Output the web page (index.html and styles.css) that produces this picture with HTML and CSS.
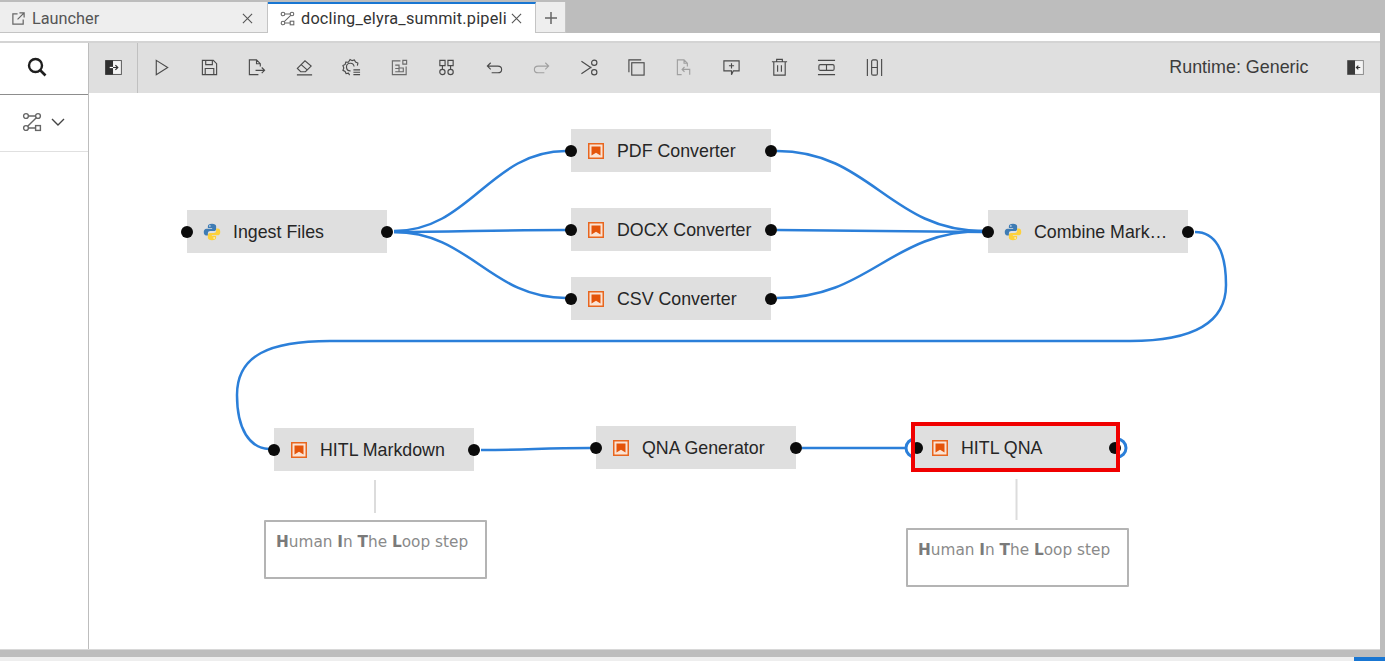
FILE: index.html
```html
<!DOCTYPE html>
<html lang="en">
<head>
<meta charset="utf-8">
<title>docling_elyra_summit.pipeline</title>
<link rel="stylesheet" href="styles.css">
</head>
<body>
<svg class="defs" width="0" height="0" aria-hidden="true">
  <defs>
    <symbol id="i-pipe" viewBox="0 0 20 20"><g fill="none" stroke="currentColor" stroke-width="1.4"><circle cx="4" cy="4" r="2.4"/><circle cx="16" cy="4" r="2.4"/><circle cx="4" cy="16" r="2.4"/><rect x="13.6" y="13.6" width="4.8" height="4.8"/><path d="M6.4 4H13.6M14.3 5.7L5.7 14.3M6.4 16H13.6"/></g></symbol>
    <symbol id="i-book" viewBox="0 0 16 16"><rect x=".75" y=".75" width="14.5" height="14.5" fill="#fbe3d4" stroke="#e8661f" stroke-width="1.5"/><path d="M3.5 3.5H12.5V12.5L8 9.8L3.5 12.5Z" fill="#e4540a"/></symbol>
    <symbol id="i-py" viewBox="0 0 24 24"><path fill="#3f7cb4" d="M12 1C8.2 1 6.5 2.2 6.5 4.3V6.6H12.2V7.6H4.6C2.4 7.6 1 9.4 1 12.1C1 15 2.3 16.6 4.4 16.6H6.5V13.7C6.5 11.9 8 10.7 9.7 10.7H14.6C16.2 10.7 17.5 9.5 17.5 7.9V4.3C17.5 2.3 15.4 1 12 1Z"/><path fill="#fdd13b" d="M12 23C15.8 23 17.5 21.8 17.5 19.7V17.4H11.8V16.4H19.4C21.6 16.4 23 14.6 23 11.9C23 9 21.7 7.4 19.6 7.4H17.5V10.3C17.5 12.1 16 13.3 14.3 13.3H9.4C7.8 13.3 6.5 14.5 6.5 16.1V19.7C6.5 21.7 8.6 23 12 23Z"/><circle cx="9.2" cy="3.9" r="1" fill="#fff"/><circle cx="14.8" cy="20.1" r="1" fill="#fff"/></symbol>
  </defs>
</svg>

<header class="tabbar">
  <div class="tab tab-launcher">
    <svg class="tab-icon" viewBox="0 0 16 16"><path d="M13 9V14H2V3H7M9 2H14V7M14 2L7 9" fill="none" stroke="currentColor" stroke-width="1.3"/></svg>
    <span class="tab-label">Launcher</span>
    <svg class="tab-close" viewBox="0 0 12 12"><path d="M1 1L11 11M11 1L1 11" stroke="currentColor" stroke-width="1.2"/></svg>
  </div>
  <div class="tab tab-active">
    <svg class="tab-icon"><use href="#i-pipe"/></svg>
    <span class="tab-label">docling_elyra_summit.pipeli</span>
    <svg class="tab-close" viewBox="0 0 12 12"><path d="M1 1L11 11M11 1L1 11" stroke="currentColor" stroke-width="1.2"/></svg>
  </div>
  <div class="tab tab-add">
    <svg class="add-icon" viewBox="0 0 12 12"><path d="M6 0V12M0 6H12" stroke="currentColor" stroke-width="1.5"/></svg>
  </div>
</header>

<div class="shell">
  <main class="workspace">
    <aside class="palette">
      <div class="palette-search">
        <svg class="search-icon" viewBox="0 0 20 20"><circle cx="8.5" cy="8.5" r="6.5" fill="none" stroke="currentColor" stroke-width="2.4"/><path d="M13 13L18.5 18.5" stroke="currentColor" stroke-width="2.6"/></svg>
      </div>
      <div class="palette-cat">
        <svg class="cat-icon"><use href="#i-pipe"/></svg>
        <svg class="chev" viewBox="0 0 14 8"><path d="M1 1L7 7L13 1" fill="none" stroke="currentColor" stroke-width="1.4"/></svg>
      </div>
    </aside>
    <section class="editor">
      <nav class="toolbar">
        <button class="tool tool-first" type="button"><svg viewBox="0 0 20 20"><rect x="1.7" y="2.7" width="16.6" height="14.6" fill="#f4f4f4" stroke="#555" stroke-width="1"/><rect x="1.5" y="2.5" width="8" height="15" fill="#2f2f2f"/><path d="M6 10H9.5" fill="none" stroke="#fff" stroke-width="1.3"/><path d="M9.5 10H14.5M12 7.5L14.5 10L12 12.5" fill="none" stroke="#333" stroke-width="1.3"/></svg></button>
        <button class="tool" type="button"><svg viewBox="0 0 20 20"><path d="M4.5 2.5L16.5 10L4.5 17.5Z"/></svg></button>
        <button class="tool" type="button"><svg viewBox="0 0 20 20"><path d="M2.5 2.5H14L17.5 6V17.5H2.5ZM6 2.5V7H13V2.5M5.5 17.5V11H14.5V17.5"/></svg></button>
        <button class="tool" type="button"><svg viewBox="0 0 20 20"><path d="M12 17.5H2.5V2H10L14 6V9M10 2V6H14M9 13H18.5M15.5 10L18.5 13L15.5 16"/></svg></button>
        <button class="tool" type="button"><svg viewBox="0 0 20 20"><path d="M2.5 11L10.5 3L17 8.5L11 14.5H6ZM6.5 7L12.8 12.5M2 17.7H18"/></svg></button>
        <button class="tool" type="button"><svg viewBox="0 0 20 20"><path d="M8 18L6.8 16L4.3 16.5L3.3 14.2L1 13L1.9 10.5L1 8L3.3 6.8L4 4.3L6.7 4.5L8.5 1.5L10.7 2.8L13 2L14.3 4.3L16.7 5.3L16.2 8M9 13.5A4 4 0 1 1 12.7 9M12 12.5H19M12 15H19M12 17.5H19"/></svg></button>
        <button class="tool tool-dim" type="button"><svg viewBox="0 0 20 20"><path d="M11 3H2.5V17.5H17V9M13.5 2.5H17.5V6.5H13.5ZM5.5 7.5H9.5V14.5H5.5M9.5 10.5H14V14.5H9.5M5.5 11H9.5"/></svg></button>
        <button class="tool" type="button"><svg viewBox="0 0 20 20"><path d="M3 2.5H8.5V8H3ZM11.5 2.5H17V8H11.5ZM5.7 8V12M14.3 8V12"/><circle cx="5.7" cy="14.7" r="2.8"/><circle cx="14.3" cy="14.7" r="2.8"/></svg></button>
        <button class="tool" type="button"><svg viewBox="0 0 20 20"><path d="M6 5L2.5 8.5L6 12M2.5 8.5H13.5C15.9 8.5 17.5 10 17.5 12C17.5 14 15.9 15.5 13.5 15.5H7"/></svg></button>
        <button class="tool tool-off" type="button"><svg viewBox="0 0 20 20"><path d="M14 5L17.5 8.5L14 12M17.5 8.5H6.5C4.1 8.5 2.5 10 2.5 12C2.5 14 4.1 15.5 6.5 15.5H13"/></svg></button>
        <button class="tool" type="button"><svg viewBox="0 0 20 20"><path d="M1.5 3.5L12 10.5M1.5 16.500L12 9.5"/><circle cx="15" cy="5" r="2.8"/><circle cx="15" cy="15" r="2.8"/></svg></button>
        <button class="tool" type="button"><svg viewBox="0 0 20 20"><path d="M2 15V2H15"/><rect x="5" y="5" width="13" height="13"/></svg></button>
        <button class="tool tool-off" type="button"><svg viewBox="0 0 20 20"><path d="M7 17.5H2.5V2H9.5L13 5.5V9M9.5 2V5.5H13M10 9.5L7.5 12L10 14.5M7.5 12H15.5V17.5"/></svg></button>
        <button class="tool" type="button"><svg viewBox="0 0 20 20"><path d="M2 3H18V13.5H12L10 17.5V13.5H2ZM10 5.5V11M7.3 8.2H12.7"/></svg></button>
        <button class="tool" type="button"><svg viewBox="0 0 20 20"><path d="M2 4H18M4 4V18H16V4M7 4V1.5H13V4M8 7.5V14.5M12 7.5V14.5"/></svg></button>
        <button class="tool" type="button"><svg viewBox="0 0 20 20"><path d="M1 2.500H19M1 17.500H19M10 7V13"/><rect x="2" y="7" width="16" height="6" rx="1.500"/></svg></button>
        <button class="tool" type="button"><svg viewBox="0 0 20 20"><path d="M2.500 1V19M17.500 1V19M7 10H13"/><rect x="7" y="2" width="6" height="16" rx="1.500"/></svg></button>
        <span class="runtime">Runtime: Generic</span>
        <button class="tool tool-last" type="button"><svg viewBox="0 0 20 20"><rect x="1.7" y="2.7" width="16.6" height="14.6" fill="#f4f4f4" stroke="#888" stroke-width="1"/><rect x="1.5" y="2.5" width="8" height="15" fill="#3a3a3a"/><path d="M15 10H11M13 8L11 10L13 12" fill="none" stroke="#333" stroke-width="1.3"/></svg></button>
      </nav>

      <div class="canvas">
        <svg class="links" viewBox="89 93 1291 557">
          <g class="link">
            <path d="M394 231C470 231 490 151 566 151"/>
            <path d="M394 232C450 232 500 230 566 230"/>
            <path d="M394 232C470 232 490 298 566 298"/>
            <path d="M777 151C870 151 890 231 983 231"/>
            <path d="M777 230L983 232"/>
            <path d="M777 298C870 298 890 231 983 231"/>
            <path d="M1195 232C1215 232 1226 250 1226 285C1226 325 1190 341 1130 341L330 341C270 341 237 355 237 395C237 430 250 448 269 449"/>
            <path d="M481 450C530 450 540 448 590 448"/>
            <path d="M802 448H906"/>
          </g>
          <g class="assoc">
            <path d="M375 480V513"/>
            <path d="M1016.5 479V520"/>
          </g>
          <g class="rings">
            <circle cx="915" cy="448" r="9"/>
            <circle cx="1117" cy="448" r="9"/>
          </g>
        </svg>

        <div class="node n-ingest"><i class="port in"></i><svg class="nicon"><use href="#i-py"/></svg><span class="nlabel">Ingest Files</span><i class="port out"></i></div>
        <div class="node n-pdf"><i class="port in"></i><svg class="nicon"><use href="#i-book"/></svg><span class="nlabel">PDF Converter</span><i class="port out"></i></div>
        <div class="node n-docx"><i class="port in"></i><svg class="nicon"><use href="#i-book"/></svg><span class="nlabel">DOCX Converter</span><i class="port out"></i></div>
        <div class="node n-csv"><i class="port in"></i><svg class="nicon"><use href="#i-book"/></svg><span class="nlabel">CSV Converter</span><i class="port out"></i></div>
        <div class="node n-combine"><i class="port in"></i><svg class="nicon"><use href="#i-py"/></svg><span class="nlabel">Combine Mark…</span><i class="port out"></i></div>
        <div class="node n-hitl"><i class="port in"></i><svg class="nicon"><use href="#i-book"/></svg><span class="nlabel">HITL Markdown</span><i class="port out"></i></div>
        <div class="node n-qna"><i class="port in"></i><svg class="nicon"><use href="#i-book"/></svg><span class="nlabel">QNA Generator</span><i class="port out"></i></div>
        <div class="node n-hitlqna"><i class="port in"></i><svg class="nicon"><use href="#i-book"/></svg><span class="nlabel">HITL QNA</span><i class="port out"></i></div>
        <div class="highlight"></div>

        <div class="comment c-one"><b>H</b>uman <b>I</b>n <b>T</b>he <b>L</b>oop step</div>
        <div class="comment c-two"><b>H</b>uman <b>I</b>n <b>T</b>he <b>L</b>oop step</div>
      </div>
    </section>
  </main>
</div>
<footer class="gutter"></footer>
<div class="statusbar"><span class="status-accent"></span></div>
</body>
</html>
```

FILE: styles.css
```css
* { box-sizing: border-box; }
html, body { margin: 0; height: 100%; }
body {
  display: flex;
  flex-direction: column;
  height: 661px;
  overflow: hidden;
  background: #bdbdbd;
  font-family: "Liberation Sans", Arial, sans-serif;
  color: #222;
}
.defs { position: absolute; }

/* tabs */
.tabbar { display: flex; height: 33px; padding-top: 2px; flex: none; }
.tab { display: flex; align-items: center; height: 31px; background: #eeeeee; border-right: 1px solid #c4c4c4; border-bottom: 1px solid #c4c4c4; color: #555; font-family: "Roboto", sans-serif; font-size: 16.3px; padding-top: 2px; }
.tab-launcher { width: 268px; padding-left: 11px; padding-right: 14px; }
.tab-active { width: 268px; background: #fff; border-top: 2px solid #1976d2; border-bottom: 0; padding-left: 12px; padding-right: 13px; padding-top: 0; color: #333; letter-spacing: .2px; }
.tab-add { width: 30px; justify-content: center; color: #666; }
.tab-icon { width: 15px; height: 15px; flex: none; margin-right: 6px; color: #666; }
.tab-label { flex: 1; min-width: 0; white-space: nowrap; }
.tab-close { width: 11px; height: 11px; flex: none; color: #555; margin-left: 3px; }
.add-icon { width: 12px; height: 12px; }

/* shell */
.shell { flex: none; height: 617px; margin-right: 5px; padding-top: 8px; background: #fff; border-bottom: 1px solid #d8d8d8; }
.workspace { display: flex; height: 608px; border-top: 2px solid #d4d4d4; }
.palette { width: 89px; flex: none; border-right: 1px solid #bdbdbd; }
.palette-search { display: flex; align-items: center; justify-content: center; height: 52px; padding-right: 14px; padding-bottom: 3px; border-bottom: 1px solid #8d8d8d; }
.search-icon { width: 20px; height: 20px; color: #1f1f1f; }
.palette-cat { display: flex; align-items: center; justify-content: center; gap: 9px; height: 57px; padding-right: 2px; padding-bottom: 2px; border-bottom: 1px solid #e0e0e0; }
.cat-icon { width: 20px; height: 20px; color: #666; }
.chev { width: 14px; height: 8px; color: #444; }

/* toolbar */
.editor { flex: 1; min-width: 0; display: flex; flex-direction: column; }
.toolbar { display: flex; align-items: center; height: 50px; padding-bottom: 2px; flex: none; background: #dfdfdf; }
.tool { display: flex; align-items: center; justify-content: center; width: 47.5px; height: 48px; padding: 0; border: 0; background: none; flex: none; }
.tool svg { width: 19px; height: 19px; fill: none; stroke: #4a4a4a; stroke-width: 1.2; }
.tool-first { width: 49px; height: 50px; margin-bottom: -2px; padding-bottom: 2px; border-right: 1px solid #c0c0c0; }
.tool-first svg, .tool-last svg { stroke: none; color: #555; }
.tool-dim svg { stroke: #6a6a6a; }
.tool-off svg { stroke: #a0a0a0; }
.runtime { margin-left: auto; font-size: 17.9px; color: #3c3c3c; white-space: nowrap; }
.tool-last { margin-left: 23px; margin-right: 1px; }

/* canvas */
.canvas { position: relative; flex: 1; background: #fff; overflow: hidden; }
.links { position: absolute; left: 0; top: 0; width: 1291px; height: 557px; }
.link path { fill: none; stroke: #2b7fd9; stroke-width: 2.5; }
.assoc path { fill: none; stroke: #dcdcdc; stroke-width: 2; }
.rings circle { fill: none; stroke: #2b7fd9; stroke-width: 3; }

.node { position: absolute; display: flex; align-items: center; width: 200px; height: 43px; padding-left: 17px; background: #dfdfdf; }
.n-ingest { left: 98px; top: 117px; }
.n-pdf { left: 482px; top: 36px; }
.n-docx { left: 482px; top: 115px; }
.n-csv { left: 482px; top: 184px; }
.n-combine { left: 899px; top: 117px; }
.n-hitl { left: 185px; top: 335px; }
.n-qna { left: 507px; top: 333px; }
.n-hitlqna { left: 826px; top: 333px; width: 201px; }
.nicon { width: 16px; height: 16px; flex: none; margin-right: 13px; }
.n-ingest .nicon, .n-combine .nicon { width: 18px; height: 18px; margin-left: -1px; margin-right: 12px; }
.nlabel { font-size: 17.8px; color: #262626; white-space: nowrap; padding-top: 1px; }
.port { position: absolute; top: 15.5px; width: 12px; height: 12px; border-radius: 50%; background: #0b0b0b; }
.port.in { left: -6px; }
.port.out { right: -6px; }
.n-hitlqna .port.in { left: -4px; }
.n-hitlqna .port.out { right: -5px; }
.highlight { position: absolute; left: 822px; top: 329px; width: 209px; height: 50px; border: 4px solid #f00000; }

.comment { position: absolute; width: 223px; height: 59px; padding: 11px 10px; background: #fff; border: 2px solid #b4b4b4; border-radius: 1px; font-family: "DejaVu Sans", sans-serif; font-size: 15.3px; color: #8a8a8a; white-space: nowrap; }
.comment b { color: #7a7a7a; }
.c-one { left: 175px; top: 427px; }
.c-two { left: 817px; top: 435px; }

/* footer */
.gutter { flex: none; height: 7px; }
.statusbar { flex: 1; display: flex; justify-content: flex-end; background: #eeeeee; }
.status-accent { width: 31px; background: #1976d2; }
```
